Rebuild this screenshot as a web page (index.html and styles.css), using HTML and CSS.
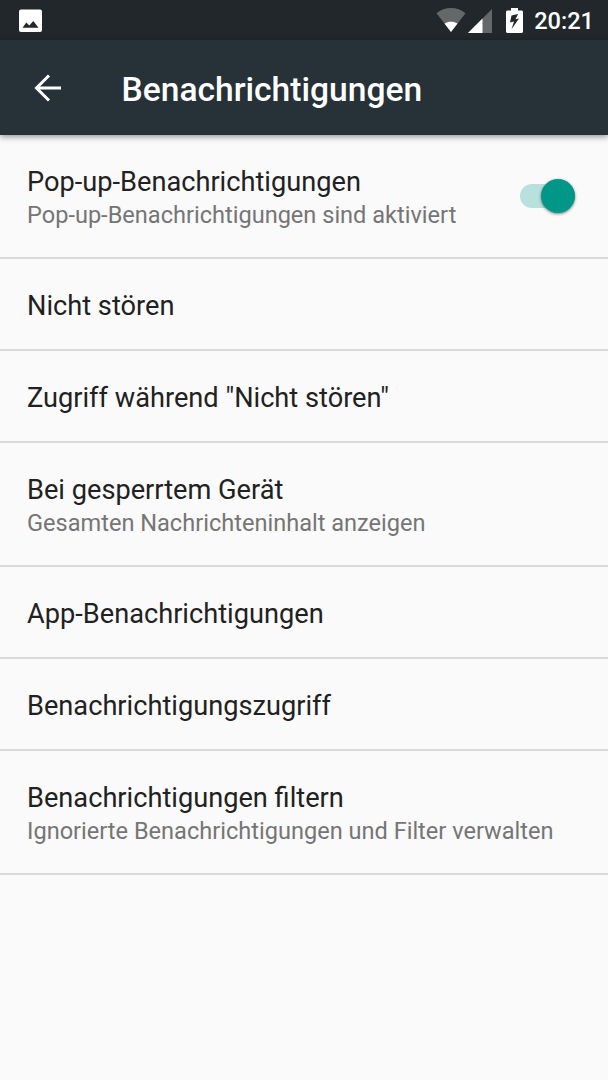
FILE: index.html
```html
<!DOCTYPE html>
<html lang="de">
  <head>
    <meta charset="UTF-8" />
    <meta name="viewport" content="width=device-width, initial-scale=1.0" />
    <title>Benachrichtigungen</title>
    <link rel="stylesheet" href="styles.css">
  </head>
  <body>
    <div class="status-bar">
      <svg class="icon-image" viewBox="0 0 31 31">
        <path fill="#fff" fill-rule="evenodd" d="M6 4.500h19a2 2 0 0 1 2 2v18.500a2 2 0 0 1-2 2H6a2 2 0 0 1-2-2V6.500a2 2 0 0 1 2-2zM7.500 22.800h16L18.300 16l-4 4.500-3-3z" />
      </svg>
      <div class="status-icons">
        <svg class="icon-wifi" viewBox="0 0 30 26">
          <path fill="#646869" d="M15 25L0.500 6.200C4.500 2.700 9.500 1 15 1s10.500 1.700 14.500 5.200z" />
          <path fill="#fff" d="M15 25L8.500 16.500C10.400 15.400 12.600 14.800 15 14.800s4.600.6 6.500 1.700z" />
        </svg>
        <svg class="icon-signal" viewBox="0 0 24 24">
          <path fill="#646869" d="M0 24L24 0v24z" />
          <path fill="#fff" d="M0 24L14.500 9.500V24z" />
        </svg>
        <svg class="icon-battery" viewBox="0 0 17 25">
          <path fill="#fff" fill-rule="evenodd" d="M5 0h7v2.500h3.500c.8 0 1.500.6 1.500 1.400v19.600c0 .8-.7 1.500-1.500 1.500h-14C.7 25 0 24.300 0 23.500V3.900c0-.8.7-1.400 1.500-1.400H5zM12 6L5.500 7.500 4 14.500l4-1-2.500 7.700L13 10.500l-3.500.8z" />
        </svg>
        <span class="clock">20:21</span>
      </div>
    </div>

    <div class="toolbar">
      <svg class="icon-back" viewBox="0 0 28 28">
        <path fill="none" stroke="#fff" stroke-width="3" d="M27 14H3M15 1.500L2.500 14L15 26.500" />
      </svg>
      <h1 class="toolbar-title">Benachrichtigungen</h1>
    </div>

    <ul class="settings">
      <li class="item two-line">
        <div class="text">
          <div class="title">Pop-up-Benachrichtigungen</div>
          <div class="summary">Pop-up-Benachrichtigungen sind aktiviert</div>
        </div>
        <div class="switch"><div class="thumb"></div></div>
      </li>
      <li class="item">
        <div class="title">Nicht stören</div>
      </li>
      <li class="item">
        <div class="title">Zugriff während "Nicht stören"</div>
      </li>
      <li class="item two-line">
        <div class="text">
          <div class="title">Bei gesperrtem Gerät</div>
          <div class="summary">Gesamten Nachrichteninhalt anzeigen</div>
        </div>
      </li>
      <li class="item">
        <div class="title">App-Benachrichtigungen</div>
      </li>
      <li class="item">
        <div class="title">Benachrichtigungszugriff</div>
      </li>
      <li class="item two-line">
        <div class="text">
          <div class="title">Benachrichtigungen filtern</div>
          <div class="summary">Ignorierte Benachrichtigungen und Filter verwalten</div>
        </div>
      </li>
    </ul>
  </body>
</html>
```
FILE: styles.css
```css
* {
  box-sizing: border-box;
}

body {
  margin: 0;
  min-height: 100vh;
  background-color: #fafafa;
  font-family: Roboto, "Liberation Sans", sans-serif;
}

svg {
  display: block;
}

.status-bar {
  display: flex;
  justify-content: space-between;
  align-items: center;
  height: 40px;
  padding: 0 14px 0 15px;
  background-color: #21272b;
}

.icon-image {
  width: 31px;
  height: 31px;
}

.status-icons {
  display: flex;
  align-items: center;
}

.icon-wifi {
  width: 30px;
  height: 26px;
}

.icon-signal {
  width: 24px;
  height: 24px;
  margin: 1px 0 0 2px;
}

.icon-battery {
  width: 17px;
  height: 25px;
  margin: 0 11px 0 14px;
}

.clock {
  color: #fff;
  font-size: 23.6px;
  font-weight: 500;
  line-height: 28px;
  padding-top: 2px;
}

.toolbar {
  display: flex;
  align-items: center;
  height: 95px;
  padding-left: 34px;
  background-color: #273238;
  box-shadow: 0 2px 6px rgba(0, 0, 0, 0.4);
}

.icon-back {
  width: 28px;
  height: 28px;
}

.toolbar-title {
  margin: 4px 0 0 59.5px;
  color: #fff;
  font-size: 33.6px;
  font-weight: 500;
  line-height: 40px;
}

.settings {
  margin: 0;
  padding: 0;
  list-style: none;
}

.item {
  display: flex;
  justify-content: space-between;
  align-items: center;
  height: 92px;
  padding: 4px 33px 0 27px;
  border-bottom: 2px solid #dadada;
}

.item.two-line {
  height: 124px;
  padding-top: 3px;
}

.title {
  color: #212121;
  font-size: 27.2px;
  line-height: 32px;
}

.summary {
  color: #757575;
  font-size: 23.57px;
  line-height: 28px;
  margin-top: 3px;
}

.switch {
  display: flex;
  justify-content: flex-end;
  align-items: center;
  width: 55px;
  height: 24px;
  margin-bottom: 3px;
  border-radius: 12px;
  background-color: #b8e0dc;
}

.thumb {
  width: 34px;
  height: 34px;
  flex-shrink: 0;
  border-radius: 50%;
  background-color: #009688;
  box-shadow: 0 1px 3px rgba(0, 0, 0, 0.5);
}
```
